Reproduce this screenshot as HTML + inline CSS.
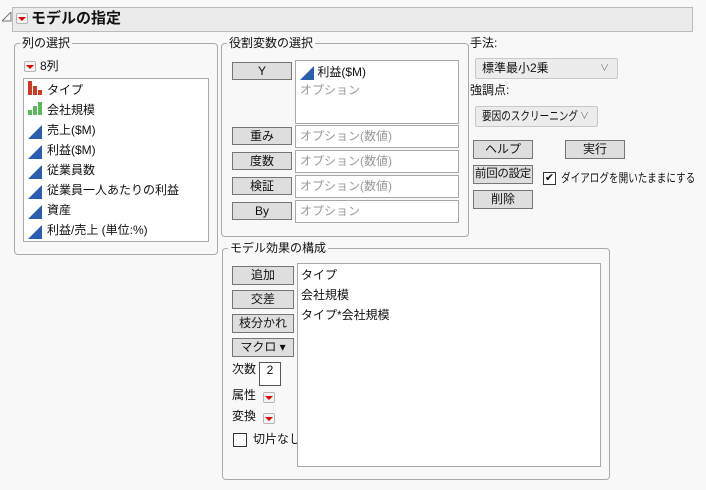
<!DOCTYPE html>
<html><head><meta charset="utf-8"><style>
*{box-sizing:border-box}
body{margin:0;width:706px;height:490px;background:#f8f8f8;font-family:"Liberation Sans","Noto Sans CJK JP",sans-serif;font-size:12px;color:#111;position:relative;overflow:hidden}
.a{position:absolute;white-space:nowrap}
.grp{position:absolute;border:1px solid #aaa;border-radius:4px}
.lg{position:absolute;background:#f8f8f8;padding:0 2px;line-height:14px;top:-8px;left:5px;white-space:nowrap}
.btn{position:absolute;background:#dedede;border:1px solid #767676;text-align:center;line-height:16px;font-size:12px;white-space:nowrap;overflow:visible}
.box{position:absolute;background:#fff;border:1px solid #a8a8a8}
.opt{color:#999}
.dd{position:absolute;width:12px;height:11px;border:1px solid #b5b5b5;border-radius:2px;background:#f4f4f4}
.dd:after{content:"";position:absolute;left:1px;top:3px;border-left:4px solid transparent;border-right:4px solid transparent;border-top:4px solid #d00;}
.tri{display:inline-block;width:0;height:0;border-left:14px solid transparent;border-bottom:14px solid #2a5db0;vertical-align:middle}
.sel{position:absolute;background:#ececec;border:1px solid #c8c8c8;border-radius:2px;padding-left:6px;line-height:19px;white-space:nowrap}
.sel span{position:absolute;right:8px;top:0;color:#777;font-size:9px}
.sq{display:inline-block;transform-origin:left center}
</style></head><body>
<svg class="a" style="left:2px;top:12px" width="10" height="10"><path d="M9 0 L9 9 L0 9 Z" fill="none" stroke="#777"/></svg>
<div class="a" style="left:12px;top:7px;width:681px;height:25px;background:#ebebeb;border:1px solid #bbb"></div>
<div class="dd" style="left:16px;top:13px"></div>
<div class="a" style="left:31px;top:8px;font-weight:bold;font-size:15px;line-height:22px">モデルの指定</div>

<div class="grp" style="left:14px;top:43px;width:204px;height:212px"><div class="lg">列の選択</div></div>
<div class="dd" style="left:24px;top:61px"></div>
<div class="a" style="left:40px;top:59px;line-height:15px">8列</div>
<div class="box" style="left:23px;top:78px;width:186px;height:164px"></div>
<svg class="a" style="left:28px;top:81px" width="14" height="14"><rect x="0" y="0" width="4" height="14" fill="#d03a22"/><rect x="5" y="5" width="4" height="9" fill="#d03a22"/><rect x="10" y="9" width="4" height="5" fill="#d03a22"/></svg>
<svg class="a" style="left:28px;top:101px" width="14" height="14"><rect x="0" y="9" width="4" height="5" fill="#5cb85c"/><rect x="5" y="5" width="4" height="9" fill="#5cb85c"/><rect x="10" y="1" width="4" height="13" fill="#5cb85c"/></svg>
<div class="a" style="left:47px;top:80px;line-height:20px">タイプ<br>会社規模<br>売上($M)<br>利益($M)<br>従業員数<br>従業員一人あたりの利益<br>資産<br>利益/売上 (単位:%)</div>
<div class="a" style="left:28px;top:121px;line-height:20px"><span class="tri"></span><br><span class="tri"></span><br><span class="tri"></span><br><span class="tri"></span><br><span class="tri"></span><br><span class="tri"></span></div>

<div class="grp" style="left:221px;top:43px;width:248px;height:194px"><div class="lg">役割変数の選択</div></div>
<div class="btn" style="left:232px;top:62px;width:60px;height:18px">Y</div>
<div class="btn" style="left:232px;top:127px;width:60px;height:18px">重み</div>
<div class="btn" style="left:232px;top:152px;width:60px;height:18px">度数</div>
<div class="btn" style="left:232px;top:177px;width:60px;height:18px">検証</div>
<div class="btn" style="left:232px;top:202px;width:60px;height:18px">By</div>
<div class="box" style="left:295px;top:60px;width:164px;height:64px"></div>
<div class="a" style="left:300px;top:63px;line-height:18px"><span class="tri"></span> 利益($M)<br><span class="opt">オプション</span></div>
<div class="box" style="left:295px;top:125px;width:164px;height:23px"></div>
<div class="box" style="left:295px;top:150px;width:164px;height:23px"></div>
<div class="box" style="left:295px;top:175px;width:164px;height:23px"></div>
<div class="box" style="left:295px;top:200px;width:164px;height:23px"></div>
<div class="a opt" style="left:300px;top:128px;line-height:17px">オプション(数値)</div>
<div class="a opt" style="left:300px;top:153px;line-height:17px">オプション(数値)</div>
<div class="a opt" style="left:300px;top:178px;line-height:17px">オプション(数値)</div>
<div class="a opt" style="left:300px;top:203px;line-height:17px">オプション</div>

<div class="a" style="left:470px;top:36px;line-height:15px">手法:</div>
<div class="sel" style="left:475px;top:58px;width:143px;height:21px">標準最小2乗<span>&#8744;</span></div>
<div class="a" style="left:470px;top:83px;line-height:15px">強調点:</div>
<div class="sel" style="left:475px;top:106px;width:123px;height:21px"><span class="sq" style="position:static;color:#111;font-size:12px;transform:scaleX(0.8)">要因のスクリーニング</span><span>&#8744;</span></div>
<div class="btn" style="left:473px;top:140px;width:60px;height:19px">ヘルプ</div>
<div class="btn" style="left:565px;top:140px;width:60px;height:19px">実行</div>
<div class="btn" style="left:473px;top:165px;width:60px;height:19px;font-size:11.5px;letter-spacing:-0.3px">前回の設定</div>
<div class="btn" style="left:473px;top:190px;width:60px;height:19px">削除</div>
<div class="a" style="left:543px;top:172px;width:13px;height:13px;border:1px solid #333;background:#fff;font-size:11px;line-height:11px;text-align:center">✔</div>
<div class="a" style="left:561px;top:170px;line-height:16px"><span class="sq" style="transform:scaleX(0.8)">ダイアログを開いたままにする</span></div>

<div class="grp" style="left:222px;top:248px;width:388px;height:232px"><div class="lg">モデル効果の構成</div></div>
<div class="btn" style="left:232px;top:266px;width:62px;height:19px">追加</div>
<div class="btn" style="left:232px;top:290px;width:62px;height:19px">交差</div>
<div class="btn" style="left:232px;top:314px;width:62px;height:19px">枝分かれ</div>
<div class="btn" style="left:232px;top:338px;width:62px;height:19px">マクロ ▾</div>
<div class="a" style="left:232px;top:362px;line-height:15px">次数</div>
<div class="box" style="left:259px;top:362px;width:22px;height:24px;text-align:center;line-height:14px;border-color:#555">2</div>
<div class="a" style="left:232px;top:388px;line-height:15px">属性</div>
<div class="dd" style="left:263px;top:392px"></div>
<div class="a" style="left:232px;top:409px;line-height:15px">変換</div>
<div class="dd" style="left:263px;top:413px"></div>
<div class="a" style="left:233px;top:433px;width:14px;height:14px;border:1px solid #333;background:#fff"></div>
<div class="a" style="left:253px;top:432px;line-height:15px">切片なし</div>
<div class="box" style="left:297px;top:263px;width:304px;height:204px"></div>
<div class="a" style="left:301px;top:265px;line-height:20px">タイプ<br>会社規模<br>タイプ*会社規模</div>
</body></html>
